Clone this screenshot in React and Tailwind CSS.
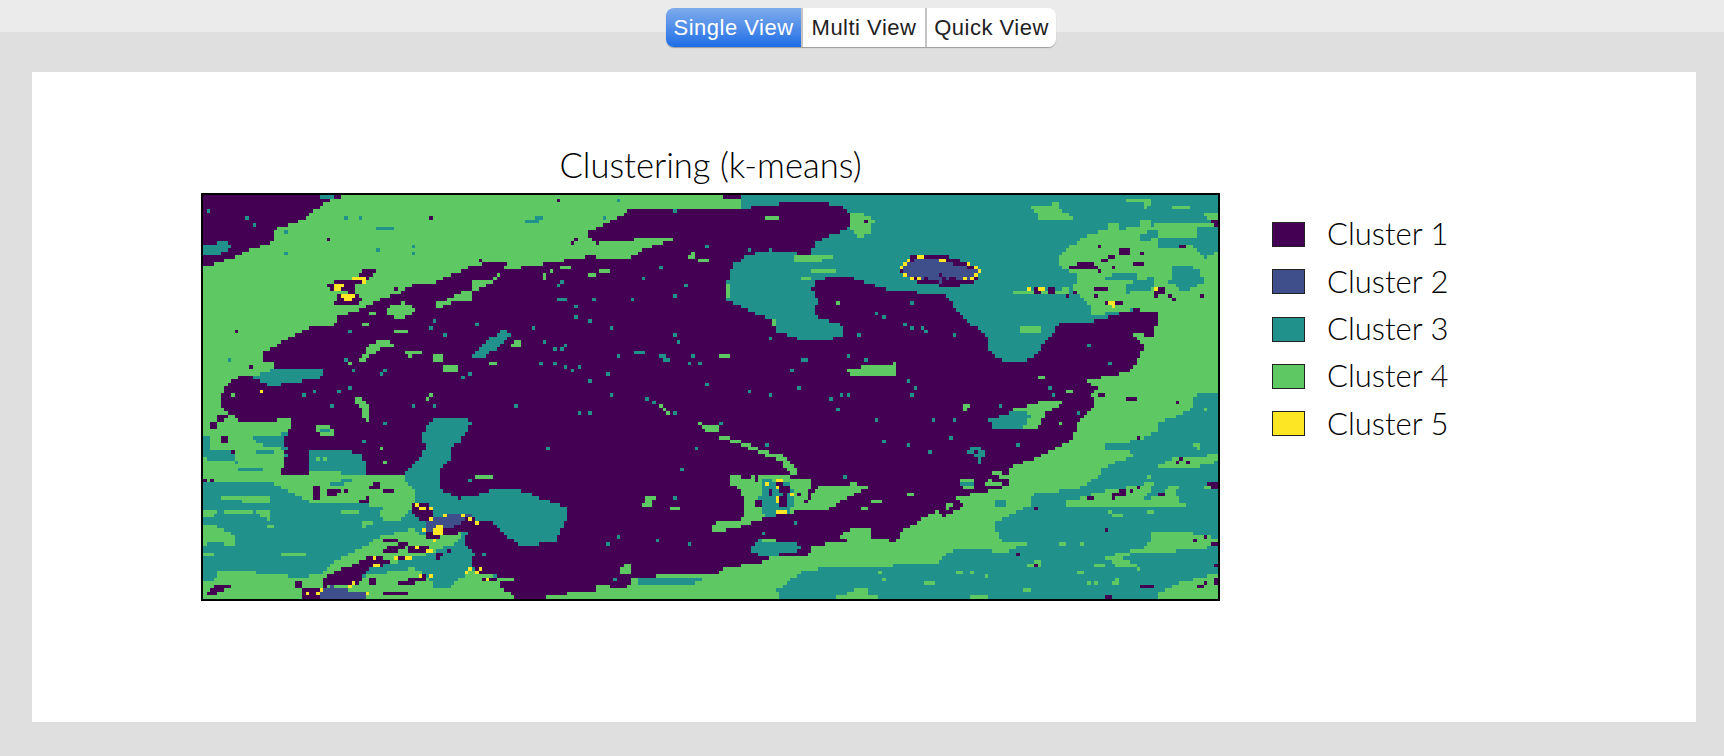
import React from 'react';

const PURPLE = '#440154';
const BLUE = '#3f4f8c';
const TEAL = '#21918c';
const GREEN = '#5ec962';
const YELLOW = '#fde725';

const PLOT_W = 1015;
const PLOT_H = 404;
const COLS = 287;
const ROWS = 114;

// crops of the picture the outlines were read from
const ORIGINS = { a: [190, 140], b: [720, 140], c: [190, 370], d: [720, 370] };
const ZOOM = 2.958;

const toCell = (quad, x, y) => {
  const [ox, oy] = ORIGINS[quad];
  return [((ox + x / ZOOM - 203) / PLOT_W) * COLS, ((oy + y / ZOOM - 195) / PLOT_H) * ROWS];
};

const shapes = [
  // band across the top left
  [GREEN, 'a', [37, 375, 130, 350, 180, 325, 250, 300, 245, 265, 330, 240, 390, 190, 450, 165, 1580, 165, 1580, 205, 1300, 205, 1260, 235, 1170, 275, 1200, 305, 1300, 295, 1450, 285, 1340, 325, 1300, 350, 1170, 345, 1000, 375, 930, 385, 895, 410, 830, 420, 835, 440, 800, 450, 770, 470, 710, 490, 740, 495, 780, 480, 845, 470, 830, 450, 880, 430, 920, 395, 940, 362, 900, 358, 830, 375, 770, 400, 730, 420, 660, 430, 640, 445, 540, 480, 490, 510, 440, 520, 430, 545, 360, 550, 310, 575, 270, 600, 220, 630, 215, 655, 250, 660, 240, 700, 37, 700]],
  [PURPLE, 'a', [405, 430, 450, 410, 490, 410, 520, 380, 555, 385, 525, 415, 490, 425, 490, 450, 510, 475, 490, 490, 420, 490, 440, 460, 470, 450, 420, 445]],
  [YELLOW, 'a', [475, 408, 515, 408, 515, 420, 475, 418]],
  [YELLOW, 'a', [425, 425, 460, 420, 460, 432, 440, 447, 425, 447]],
  [YELLOW, 'a', [450, 458, 490, 455, 470, 475, 452, 470]],
  [TEAL, 'a', [40, 310, 110, 300, 125, 320, 75, 340, 40, 345]],
  [TEAL, 'a', [385, 165, 430, 165, 430, 175, 390, 175]],
  [TEAL, 'a', [545, 265, 575, 255, 615, 265, 615, 270, 545, 270]],
  [TEAL, 'a', [990, 238, 1040, 225, 1050, 240, 990, 245]],
  [GREEN, 'a', [575, 500, 630, 480, 670, 505, 620, 530, 590, 520]],
  [GREEN, 'a', [535, 600, 580, 592, 615, 605, 560, 620, 510, 655, 450, 665, 500, 650]],
  [GREEN, 'a', [600, 558, 640, 565, 640, 575, 605, 575]],
  [GREEN, 'a', [638, 628, 685, 628, 685, 634, 645, 642]],
  [GREEN, 'a', [715, 635, 745, 635, 745, 652, 715, 652]],
  [GREEN, 'a', [885, 655, 908, 655, 895, 670]],
  [GREEN, 'a', [745, 670, 790, 670, 790, 690, 755, 690]],
  [GREEN, 'a', [945, 600, 985, 592, 985, 610, 950, 615]],
  [GREEN, 'a', [1060, 385, 1140, 367, 1140, 375, 1060, 390]],
  [GREEN, 'a', [1040, 395, 1055, 400, 1050, 410, 1040, 408]],
  [GREEN, 'a', [1175, 393, 1200, 393, 1200, 400, 1175, 400]],
  [GREEN, 'a', [1210, 385, 1240, 378, 1240, 390, 1210, 392]],
  [GREEN, 'a', [1475, 340, 1492, 332, 1492, 348, 1470, 348]],
  [GREEN, 'a', [1505, 350, 1530, 350, 1530, 358, 1505, 358]],
  [GREEN, 'a', [505, 545, 530, 535, 530, 548, 505, 548]],
  [GREEN, 'a', [535, 505, 550, 505, 545, 522, 535, 522]],
  [TEAL, 'a', [838, 640, 880, 590, 930, 560, 950, 575, 920, 610, 870, 640]],
  [GREEN, 'a', [945, 600, 985, 592, 985, 610, 950, 615]],
  [TEAL, 'a', [1085, 465, 1115, 465, 1115, 480, 1085, 478]],
  [TEAL, 'a', [1300, 620, 1345, 625, 1345, 635, 1310, 628]],
  [TEAL, 'a', [1385, 638, 1415, 640, 1415, 652, 1395, 650]],

  // top right water
  [GREEN, 'b', [-10, 170, 50, 170, 120, 185, 60, 205, -10, 205]],
  [TEAL, 'b', [60, 165, 1478, 165, 1478, 520, 1230, 500, 1090, 540, 1010, 540, 960, 600, 930, 640, 890, 660, 840, 655, 790, 620, 800, 590, 780, 570, 720, 530, 690, 490, 660, 455, 560, 450, 490, 440, 380, 405, 290, 410, 270, 440, 290, 470, 280, 520, 365, 550, 365, 575, 330, 590, 240, 590, 170, 570, 150, 530, 70, 500, 20, 470, 20, 420, 40, 370, 70, 345, 140, 325, 270, 340, 280, 300, 385, 260, 385, 215, 350, 190, 210, 185, 120, 195, 60, 205]],
  [GREEN, 'b', [385, 215, 420, 210, 455, 240, 440, 280, 410, 287, 385, 265]],
  [GREEN, 'b', [220, 342, 330, 342, 330, 350, 270, 365, 220, 360]],
  [GREEN, 'b', [270, 385, 340, 385, 340, 392, 270, 395]],
  [GREEN, 'b', [240, 400, 370, 400, 300, 408, 240, 410]],
  [GREEN, 'b', [920, 200, 1000, 185, 1010, 210, 1050, 232, 945, 235]],
  [GREEN, 'b', [1000, 350, 1040, 310, 1100, 275, 1220, 260, 1300, 250, 1450, 215, 1478, 215, 1478, 700, 1225, 700, 1240, 640, 1260, 610, 1210, 570, 1280, 580, 1280, 560, 1300, 545, 1300, 515, 1230, 500, 1100, 520, 1100, 490, 1030, 440, 870, 445, 870, 455, 1030, 460, 1060, 400, 1000, 370]],
  [TEAL, 'b', [1340, 370, 1420, 380, 1430, 420, 1370, 450, 1330, 420]],
  [TEAL, 'b', [1140, 400, 1230, 392, 1230, 410, 1140, 416]],
  [TEAL, 'b', [1200, 425, 1280, 405, 1280, 440, 1200, 452]],
  [TEAL, 'b', [1240, 275, 1300, 270, 1300, 290, 1240, 300]],
  [TEAL, 'b', [1300, 290, 1400, 290, 1400, 310, 1300, 320]],
  [TEAL, 'b', [1410, 260, 1478, 255, 1478, 330, 1430, 350, 1400, 320]],
  [TEAL, 'b', [1270, 215, 1478, 205, 1478, 240, 1290, 250]],
  [GREEN, 'b', [1070, 170, 1140, 170, 1140, 178, 1070, 178]],
  [GREEN, 'b', [1200, 170, 1280, 170, 1260, 205, 1250, 185, 1200, 185]],
  [GREEN, 'b', [1340, 190, 1390, 190, 1390, 205, 1340, 205]],
  [GREEN, 'b', [1145, 250, 1180, 250, 1175, 265, 1150, 265]],
  [GREEN, 'b', [1240, 240, 1280, 235, 1270, 262, 1240, 265]],
  [GREEN, 'b', [1435, 215, 1478, 210, 1478, 240, 1440, 238]],
  [PURPLE, 'b', [1015, 385, 1060, 365, 1110, 365, 1135, 390, 1080, 385]],
  [PURPLE, 'b', [1130, 350, 1170, 340, 1170, 348, 1130, 362]],
  [PURPLE, 'b', [1180, 323, 1215, 323, 1215, 340, 1180, 340]],
  [PURPLE, 'b', [1222, 360, 1265, 360, 1250, 375, 1230, 375]],
  [PURPLE, 'b', [1350, 305, 1385, 315, 1385, 322, 1360, 320]],
  [PURPLE, 'b', [1455, 238, 1478, 238, 1478, 258, 1465, 258]],
  [PURPLE, 'b', [1110, 436, 1145, 436, 1145, 445, 1110, 445]],
  [PURPLE, 'b', [1135, 480, 1190, 480, 1170, 495, 1150, 492]],
  [PURPLE, 'b', [1150, 505, 1185, 505, 1185, 513, 1150, 513]],
  [PURPLE, 'b', [1285, 430, 1315, 436, 1310, 460, 1285, 462]],
  [PURPLE, 'b', [970, 437, 1000, 437, 985, 455, 972, 455]],
  [PURPLE, 'b', [930, 438, 945, 438, 945, 452, 930, 452]],
  [YELLOW, 'b', [940, 437, 962, 437, 950, 447]],
  [YELLOW, 'b', [1152, 478, 1170, 478, 1170, 498, 1160, 498]],
  // blue patch in the water
  [PURPLE, 'b', [525, 380, 560, 345, 600, 340, 670, 345, 710, 358, 775, 385, 750, 425, 690, 432, 605, 428, 590, 420, 550, 405]],
  [BLUE, 'b', [540, 382, 570, 355, 620, 348, 695, 368, 760, 385, 740, 415, 650, 420, 590, 410, 550, 397]],
  [YELLOW, 'b', [580, 340, 602, 340, 602, 348, 580, 348]],
  [YELLOW, 'b', [648, 347, 665, 347, 665, 357, 648, 357]],
  [YELLOW, 'b', [655, 420, 692, 420, 692, 428, 655, 428]],
  [YELLOW, 'b', [752, 390, 768, 385, 768, 398, 750, 405]],
  [GREEN, 'b', [130, 230, 175, 230, 175, 236, 130, 236]],
  [GREEN, 'b', [20, 420, 32, 420, 32, 470, 20, 470]],
  [GREEN, 'b', [150, 530, 162, 530, 162, 555, 150, 555]],
  [GREEN, 'b', [340, 480, 355, 480, 355, 488, 340, 488]],
  [GREEN, 'b', [890, 555, 945, 548, 945, 568, 890, 575]],
  [GREEN, 'b', [0, 636, 28, 636, 28, 644, 0, 644]],
  [GREEN, 'b', [380, 695, 420, 665, 525, 660, 525, 695]],
  [TEAL, 'b', [228, 645, 268, 645, 250, 655]],
  [GREEN, 'b', [885, 672, 930, 672, 930, 680, 885, 680]],

  // lower left land
  [TEAL, 'c', [37, 0, 200, 0, 130, 30, 100, 60, 85, 100, 110, 125, 155, 155, 300, 145, 300, 170, 280, 200, 285, 260, 270, 270, 270, 315, 350, 315, 350, 240, 430, 232, 510, 250, 525, 310, 630, 315, 700, 232, 688, 205, 695, 170, 720, 145, 820, 138, 832, 160, 800, 210, 770, 235, 770, 260, 735, 300, 740, 350, 790, 380, 850, 370, 900, 352, 970, 355, 1110, 405, 1120, 425, 1080, 510, 980, 520, 920, 480, 895, 450, 850, 445, 820, 480, 810, 510, 840, 545, 830, 580, 860, 600, 910, 610, 920, 640, 965, 680, 965, 700, 37, 700]],
  [GREEN, 'c', [37, 0, 200, 0, 130, 30, 100, 60, 85, 100, 110, 125, 155, 155, 300, 145, 300, 170, 270, 190, 280, 260, 270, 315, 350, 315, 360, 300, 520, 310, 630, 315, 660, 350, 670, 400, 620, 450, 560, 440, 570, 410, 500, 390, 380, 400, 230, 330, 37, 330]],
  [TEAL, 'c', [37, 195, 60, 195, 60, 240, 130, 240, 140, 275, 60, 265, 37, 262]],
  [TEAL, 'c', [185, 200, 280, 190, 285, 235, 210, 220]],
  [TEAL, 'c', [200, 240, 250, 240, 250, 250, 200, 250]],
  [TEAL, 'c', [140, 285, 220, 290, 220, 300, 140, 300]],
  [TEAL, 'c', [355, 240, 430, 232, 510, 250, 525, 305, 440, 300, 360, 285]],
  [TEAL, 'c', [420, 330, 480, 320, 480, 335, 420, 340]],
  [TEAL, 'c', [185, 20, 240, 0, 400, 0, 380, 25, 315, 35, 235, 50]],
  [GREEN, 'c', [90, 370, 230, 370, 240, 400, 90, 380]],
  [GREEN, 'c', [37, 415, 80, 420, 70, 435, 37, 435]],
  [GREEN, 'c', [100, 420, 180, 420, 180, 430, 100, 430]],
  [GREEN, 'c', [200, 420, 235, 415, 235, 445, 200, 430]],
  [GREEN, 'c', [450, 415, 500, 412, 500, 430, 450, 430]],
  [GREEN, 'c', [505, 450, 560, 445, 510, 465]],
  [GREEN, 'c', [360, 475, 388, 475, 388, 483, 360, 483]],
  [GREEN, 'c', [225, 457, 245, 457, 245, 465, 225, 465]],
  [GREEN, 'c', [37, 458, 70, 458, 130, 490, 140, 522, 70, 510, 37, 520]],
  [GREEN, 'c', [270, 540, 300, 535, 345, 545, 345, 552, 270, 552]],
  [GREEN, 'c', [37, 545, 70, 545, 70, 555, 37, 555]],
  [GREEN, 'c', [80, 595, 230, 600, 320, 615, 395, 600, 420, 570, 500, 530, 570, 490, 660, 470, 690, 490, 810, 470, 790, 510, 720, 540, 640, 560, 520, 590, 510, 610, 640, 590, 690, 570, 720, 640, 760, 650, 830, 590, 850, 605, 910, 610, 920, 640, 965, 680, 965, 700, 37, 700, 37, 630, 80, 615]],
  [TEAL, 'c', [640, 570, 830, 545, 830, 580, 780, 630, 750, 650, 700, 610]],
  [GREEN, 'c', [915, 612, 960, 612, 960, 620, 915, 620]],
  [GREEN, 'c', [840, 312, 870, 312, 910, 318, 910, 325, 845, 325]],
  // purple pockets, lower left
  [PURPLE, 'c', [395, 612, 470, 580, 540, 545, 600, 570, 520, 590, 510, 612, 500, 632, 395, 642]],
  [PURPLE, 'c', [37, 672, 70, 640, 122, 640, 100, 655, 60, 672]],
  [PURPLE, 'c', [335, 642, 385, 642, 395, 688, 335, 672]],
  [PURPLE, 'c', [725, 675, 800, 675, 800, 690, 720, 690]],
  [PURPLE, 'c', [310, 630, 328, 630, 325, 648, 315, 648]],
  [PURPLE, 'c', [360, 345, 385, 345, 385, 385, 362, 385]],
  [PURPLE, 'c', [398, 352, 450, 352, 435, 370, 405, 378]],
  [PURPLE, 'c', [525, 345, 565, 325, 560, 348, 525, 360]],
  [PURPLE, 'c', [575, 355, 605, 352, 590, 368, 575, 368]],
  [PURPLE, 'c', [500, 385, 530, 378, 530, 392, 500, 392]],
  [PURPLE, 'c', [60, 150, 80, 150, 75, 170, 60, 170]],
  [PURPLE, 'c', [95, 198, 115, 195, 115, 215, 95, 215]],
  [PURPLE, 'c', [80, 130, 125, 130, 100, 150, 80, 150]],
  [PURPLE, 'c', [115, 170, 130, 170, 130, 178, 115, 178]],
  [PURPLE, 'c', [120, 232, 135, 245, 125, 248]],
  [PURPLE, 'c', [660, 395, 710, 395, 720, 445, 680, 450, 660, 420]],
  [PURPLE, 'c', [690, 430, 845, 435, 840, 470, 770, 490, 700, 500]],
  [BLUE, 'c', [700, 445, 750, 430, 830, 430, 800, 455, 760, 470, 700, 480]],
  [YELLOW, 'c', [715, 465, 750, 455, 755, 490, 725, 490]],
  [PURPLE, 'c', [728, 475, 752, 475, 752, 482, 728, 482]],
  [YELLOW, 'c', [680, 405, 698, 405, 698, 418, 680, 418]],
  [PURPLE, 'c', [570, 500, 630, 500, 600, 512, 570, 510]],
  [PURPLE, 'c', [585, 525, 640, 505, 650, 520, 600, 545, 570, 545]],
  [PURPLE, 'c', [640, 520, 700, 520, 720, 540, 640, 540]],
  [YELLOW, 'c', [648, 515, 660, 515, 660, 525, 648, 525]],
  [YELLOW, 'c', [697, 535, 715, 532, 715, 543, 697, 545]],
  [YELLOW, 'c', [715, 500, 730, 500, 730, 510, 715, 510]],
  [PURPLE, 'c', [605, 550, 660, 550, 650, 562, 605, 562]],
  [YELLOW, 'c', [636, 550, 652, 550, 652, 560, 636, 560]],
  [YELLOW, 'c', [542, 568, 566, 568, 566, 588, 542, 588]],
  [PURPLE, 'c', [610, 630, 690, 605, 700, 620, 630, 640]],
  [PURPLE, 'c', [565, 660, 640, 655, 650, 668, 575, 668]],
  [PURPLE, 'c', [525, 620, 555, 612, 555, 630, 525, 635]],
  [PURPLE, 'c', [720, 550, 770, 530, 770, 535, 730, 560]],
  [BLUE, 'c', [380, 652, 420, 640, 460, 650, 525, 660, 510, 688, 380, 688]],
  [YELLOW, 'c', [455, 665, 508, 665, 508, 672, 455, 672]],
  [PURPLE, 'c', [870, 615, 905, 615, 905, 630, 870, 630]],
  [YELLOW, 'c', [902, 610, 910, 610, 910, 630, 902, 630]],
  [GREEN, 'c', [480, 80, 495, 75, 525, 100, 525, 150, 515, 145, 505, 115]],
  [GREEN, 'c', [700, 80, 720, 68, 705, 90]],
  [GREEN, 'c', [370, 165, 415, 165, 430, 195, 385, 195, 370, 180]],
  [TEAL, 'c', [385, 170, 410, 170, 415, 185, 390, 188]],
  [GREEN, 'c', [1350, 375, 1385, 370, 1355, 410, 1340, 400]],
  [GREEN, 'c', [1418, 404, 1452, 404, 1452, 412, 1418, 412]],
  [GREEN, 'c', [1305, 422, 1322, 422, 1322, 430, 1305, 430]],
  [GREEN, 'c', [1262, 580, 1310, 575, 1305, 600, 1280, 605]],
  [GREEN, 'c', [1200, 640, 1235, 630, 1240, 648, 1200, 648]],
  [GREEN, 'c', [1490, 145, 1520, 160, 1568, 170, 1568, 188, 1520, 180]],
  [GREEN, 'c', [1385, 100, 1415, 118, 1415, 128, 1385, 112]],
  [GREEN, 'c', [1535, 465, 1568, 455, 1568, 480, 1545, 478]],
  [GREEN, 'c', [965, 685, 1160, 655, 1300, 640, 1300, 612, 1580, 602, 1580, 700, 965, 700]],
  [TEAL, 'c', [1330, 610, 1510, 612, 1510, 630, 1330, 632]],

  // lower right band
  [GREEN, 'd', [0, 590, 100, 570, 140, 565, 145, 550, 215, 555, 265, 545, 270, 518, 380, 510, 450, 495, 525, 510, 530, 480, 600, 440, 640, 415, 660, 435, 725, 400, 690, 380, 730, 370, 850, 345, 860, 285, 930, 265, 1000, 230, 1040, 210, 1060, 150, 1105, 110, 1100, 70, 1120, 60, 1100, 30, 1205, 5, 1220, -10, 1478, -10, 1478, 700, 0, 700]],
  [TEAL, 'd', [1478, 70, 1410, 70, 1390, 120, 1300, 155, 1300, 180, 1230, 210, 1140, 215, 1230, 250, 1130, 290, 1130, 310, 1060, 350, 920, 370, 915, 400, 820, 450, 810, 470, 840, 510, 920, 510, 840, 540, 700, 525, 640, 570, 480, 580, 250, 590, 170, 650, 190, 700, 1478, 700]],
  [GREEN, 'd', [1290, 290, 1340, 260, 1478, 250, 1478, 270, 1400, 290]],
  [GREEN, 'd', [1020, 390, 1130, 360, 1290, 330, 1250, 385, 1300, 370, 1340, 340, 1360, 390, 1400, 410, 1270, 400, 1100, 400, 1020, 402]],
  [GREEN, 'd', [1280, 480, 1380, 480, 1478, 500, 1440, 530, 1280, 540, 1180, 550, 1250, 590, 1170, 580, 1140, 555, 1260, 525]],
  [GREEN, 'd', [1300, 660, 1360, 630, 1478, 600, 1478, 700, 1280, 700]],
  [GREEN, 'd', [310, 688, 400, 650, 470, 670, 470, 700, 310, 700]],
  [GREEN, 'd', [1420, 340, 1478, 335, 1478, 355, 1440, 355]],
  [GREEN, 'd', [1255, 412, 1290, 412, 1275, 430]],
  [GREEN, 'd', [1160, 430, 1190, 430, 1190, 438, 1160, 438]],
  [GREEN, 'd', [1400, 220, 1430, 215, 1410, 240]],
  [GREEN, 'd', [770, 490, 800, 490, 800, 496, 770, 496]],
  [GREEN, 'd', [1000, 510, 1025, 510, 1025, 516, 1000, 516]],
  [GREEN, 'd', [1110, 570, 1135, 570, 1135, 578, 1110, 578]],
  [GREEN, 'd', [910, 575, 950, 560, 950, 582, 920, 585]],
  [GREEN, 'd', [700, 595, 725, 595, 725, 602, 700, 602]],
  [GREEN, 'd', [1050, 590, 1085, 600, 1055, 600]],
  [GREEN, 'd', [1160, 630, 1180, 615, 1170, 648]],
  [GREEN, 'd', [610, 630, 640, 630, 640, 638, 610, 638]],
  [GREEN, 'd', [895, 645, 915, 645, 915, 655, 895, 655]],
  [GREEN, 'd', [745, 672, 795, 672, 795, 682, 745, 682]],
  [GREEN, 'd', [400, 645, 440, 645, 440, 655, 400, 655]],
  [TEAL, 'd', [1135, 215, 1225, 235, 1140, 232]],
  [TEAL, 'd', [812, 388, 845, 388, 845, 404, 812, 404]],
  [PURPLE, 'd', [1135, 375, 1200, 352, 1205, 368, 1170, 380]],
  [PURPLE, 'd', [1095, 688, 1140, 670, 1170, 663, 1140, 690]],
  [PURPLE, 'd', [1445, 520, 1478, 500, 1478, 525, 1450, 525]],
  [PURPLE, 'd', [1298, 360, 1316, 360, 1310, 378, 1300, 378]],
  [PURPLE, 'd', [1205, 84, 1230, 84, 1230, 92, 1205, 92]],
  [PURPLE, 'd', [1120, 68, 1135, 68, 1135, 75, 1120, 75]],
  [PURPLE, 'd', [1248, 638, 1282, 638, 1282, 646, 1248, 646]],
  [PURPLE, 'd', [1410, 640, 1428, 632, 1428, 646, 1410, 648]],
  [PURPLE, 'd', [1445, 335, 1478, 335, 1478, 350, 1455, 350]],
  [PURPLE, 'd', [920, 580, 940, 570, 935, 585]],
  // islands in the purple
  [GREEN, 'd', [860, 120, 960, 90, 1015, 95, 960, 130, 935, 178, 895, 172]],
  [TEAL, 'd', [798, 145, 860, 125, 925, 128, 890, 178, 800, 178]],
  [TEAL, 'd', [88, 535, 100, 510, 125, 500, 165, 505, 230, 510, 242, 530, 220, 545, 120, 548]],
  [GREEN, 'd', [125, 498, 165, 498, 165, 508, 125, 508]],
  [GREEN, 'd', [350, 492, 400, 465, 450, 465, 450, 500, 380, 510]],
  [TEAL, 'd', [725, 235, 760, 225, 790, 250, 765, 265, 745, 250]],
  [GREEN, 'd', [710, 325, 755, 325, 750, 350, 720, 350]],
  [TEAL, 'd', [712, 328, 755, 328, 755, 340, 715, 340]],
  [GREEN, 'd', [775, 330, 805, 325, 850, 345, 790, 345]],
  [GREEN, 'd', [800, 300, 835, 305, 860, 310, 860, 325, 830, 320]],
  [GREEN, 'd', [665, 400, 690, 395, 680, 412, 665, 412]],
  [GREEN, 'd', [725, 100, 742, 100, 735, 118, 725, 118]],
  [GREEN, 'd', [938, 14, 958, 14, 958, 32, 938, 32]],
  [GREEN, 'd', [375, -5, 500, -5, 490, 12, 385, 12]],
  [GREEN, 'd', [1075, 25, 1130, 40, 1100, 45]],
  [GREEN, 'd', [1020, 65, 1050, 58, 1030, 75]],
  [GREEN, 'd', [1000, 150, 1020, 158, 1005, 160]],
  [GREEN, 'd', [1018, 170, 1040, 170, 1040, 178, 1018, 178]],
  [GREEN, 'd', [0, 190, 60, 210, 130, 238, 190, 255, 232, 305, 215, 312, 175, 265, 120, 247, 50, 217, 0, 200]],
  [GREEN, 'd', [30, 315, 60, 305, 270, 320, 270, 340, 245, 402, 295, 345, 405, 335, 440, 347, 385, 375, 300, 420, 220, 420, 130, 440, 0, 480, -10, 450, 70, 440, 75, 400, 60, 350, 30, 340]],
  [TEAL, 'd', [120, 320, 210, 335, 218, 400, 200, 430, 130, 432, 120, 390, 105, 400, 125, 360]],
  [PURPLE, 'd', [155, 330, 205, 340, 215, 365, 190, 370]],
  [PURPLE, 'd', [145, 350, 160, 350, 160, 375, 145, 375]],
  [PURPLE, 'd', [178, 375, 195, 375, 195, 408, 178, 408]],
  [PURPLE, 'd', [100, 388, 125, 388, 120, 402, 100, 402]],
  [PURPLE, 'd', [62, 310, 92, 310, 92, 316, 62, 316]],
  [PURPLE, 'd', [100, 312, 120, 320, 105, 328]],
  [PURPLE, 'd', [225, 362, 238, 362, 238, 372, 225, 372]],
  [YELLOW, 'd', [168, 318, 190, 316, 190, 327, 168, 327]],
  [YELLOW, 'd', [130, 335, 140, 335, 140, 346, 130, 346]],
  [YELLOW, 'd', [165, 345, 176, 345, 170, 354]],
  [YELLOW, 'd', [208, 362, 220, 362, 214, 372]],
  [YELLOW, 'd', [198, 380, 211, 380, 205, 390]],
  [YELLOW, 'd', [165, 413, 195, 413, 195, 422, 165, 422]],
  [YELLOW, 'd', [167, 376, 173, 376, 173, 390, 167, 390]],
  [GREEN, 'd', [418, 408, 440, 395, 435, 410, 422, 412]],
  [GREEN, 'd', [450, 388, 476, 388, 476, 394, 450, 394]],
  [GREEN, 'd', [475, 379, 510, 379, 510, 385, 475, 385]],
  [GREEN, 'd', [520, 371, 545, 371, 545, 378, 520, 378]],
  [GREEN, 'd', [550, 362, 570, 362, 570, 370, 550, 370]],
];

// single cells
const specks = [
  [TEAL, 'a', [[55, 215], [168, 232], [193, 257], [288, 275], [460, 232], [502, 232], [660, 310], [665, 335], [555, 328], [280, 335], [118, 648], [1085, 432], [1103, 422], [1138, 490], [1138, 525], [1188, 535], [1248, 552], [1018, 552], [1197, 474], [1310, 474], [1470, 432], [1438, 458], [1393, 378], [1343, 413], [845, 544], [750, 578], [475, 570], [716, 552], [726, 535], [1438, 578], [1448, 595], [1110, 604], [1050, 595], [1076, 622], [1103, 622], [1265, 638], [1488, 638], [1505, 656], [1480, 665], [1042, 656], [1078, 656], [1110, 675], [1128, 682], [1155, 675], [485, 682], [572, 682], [458, 648], [1225, 232], [1265, 180], [1430, 214], [1530, 310]]],
  [PURPLE, 'a', [[143, 570], [408, 293], [855, 354], [1095, 180], [1130, 302], [1147, 293], [613, 440], [640, 438], [180, 675], [715, 230]]],
  [TEAL, 'b', [[565, 483], [462, 518], [488, 527], [547, 544], [565, 552], [598, 552], [607, 562], [693, 578], [410, 578], [153, 587], [1095, 605], [1157, 665], [378, 640], [428, 648], [92, 320], [150, 327], [248, 648]]],
  [PURPLE, 'b', [[437, 240], [1122, 318], [1243, 336], [1160, 380], [1423, 465], [1028, 465], [1045, 448], [1113, 465], [1330, 465], [1345, 472]]],
  [YELLOW, 'b', [[540, 380], [547, 370], [556, 360], [550, 397], [565, 405], [590, 413], [612, 405], [720, 405], [745, 412], [738, 372], [752, 380], [915, 440], [1293, 440]]],
  [PURPLE, 'b', [[615, 405], [658, 405], [680, 405], [695, 405], [708, 363], [650, 395]]],
  [TEAL, 'c', [[563, 10], [803, 18], [830, 10], [1232, 10], [1188, 36], [1533, 45], [340, 78], [365, 62], [443, 62], [468, 53], [425, 105], [658, 105], [726, 105], [966, 105], [1250, 78], [1155, 131], [1180, 131], [1352, 88], [1370, 96], [1430, 122], [580, 157], [1498, 227], [1060, 235], [1455, 296], [828, 330], [1430, 382], [1265, 495], [1240, 512], [1378, 504], [1480, 512], [515, 210], [1257, 622], [868, 547]]],
  [GREEN, 'c', [[570, 227], [575, 270], [125, 70], [400, 268], [380, 260]]],
  [PURPLE, 'c', [[460, 356], [530, 382], [45, 322], [65, 322]]],
  [YELLOW, 'c', [[210, 62], [672, 398], [710, 408], [718, 440], [760, 434], [803, 434], [828, 442], [845, 450], [690, 468], [672, 530], [348, 658], [375, 658], [390, 652], [375, 680], [470, 640], [485, 632], [820, 600], [845, 600], [855, 590], [828, 590], [682, 605], [708, 605], [530, 658], [545, 555], [610, 555], [885, 622]]],
  [TEAL, 'd', [[85, 62], [150, 78], [230, 52], [325, 88], [350, 114], [360, 78], [378, 70], [465, 148], [633, 148], [693, 148], [480, 210], [557, 217], [616, 244], [684, 200], [883, 217], [135, 217], [772, 279], [368, 314], [557, 36], [574, 53], [565, 70], [975, 53], [985, 70], [830, 105], [1062, 122], [128, 488], [222, 452], [5, 158], [215, 2]]],
  [PURPLE, 'd', [[1355, 96], [1235, 200], [1362, 260], [1381, 270], [1355, 279], [1218, 356], [1235, 348], [1090, 382], [1106, 382], [935, 408], [1140, 468], [1405, 504], [1432, 495], [882, 547], [1466, 582], [1466, 616], [1466, 632], [755, 244], [1432, 632]]],
  [GREEN, 'd', [[960, 296], [1080, 270], [1268, 314], [1350, 348], [1150, 425], [1070, 510], [745, 598], [1090, 625], [1110, 625], [480, 615], [478, 598], [790, 607], [1148, 174], [1440, 114]]],
  [TEAL, 'd', [[1315, 630]]],
];

const inside = (poly, x, y) => {
  let hit = false;
  for (let i = 0, j = poly.length - 1; i < poly.length; j = i++) {
    const [xa, ya] = poly[i];
    const [xb, yb] = poly[j];
    if (ya > y !== yb > y && x < ((xb - xa) * (y - ya)) / (yb - ya) + xa) hit = !hit;
  }
  return hit;
};

// paint shapes in order into a grid, then merge each row into runs
const buildRuns = () => {
  const grid = Array.from({ length: ROWS }, () => Array(COLS).fill(PURPLE));
  shapes.forEach(([color, quad, flat]) => {
    const poly = [];
    for (let i = 0; i < flat.length; i += 2) poly.push(toCell(quad, flat[i], flat[i + 1]));
    for (let r = 0; r < ROWS; r++) {
      for (let c = 0; c < COLS; c++) {
        if (inside(poly, c + 0.5, r + 0.5)) grid[r][c] = color;
      }
    }
  });
  specks.forEach(([color, quad, pts]) => {
    pts.forEach(([x, y]) => {
      const [c, r] = toCell(quad, x, y);
      const row = grid[Math.floor(r)];
      if (row && Math.floor(c) < COLS && c >= 0) row[Math.floor(c)] = color;
    });
  });
  const runs = [];
  grid.forEach((row, r) => {
    let start = 0;
    for (let c = 1; c <= COLS; c++) {
      if (c === COLS || row[c] !== row[start]) {
        runs.push({ x: start, y: r, w: c - start, color: row[start] });
        start = c;
      }
    }
  });
  return runs;
};

const runs = buildRuns();

const legend = [
  { label: 'Cluster 1', color: 'bg-[#440154]' },
  { label: 'Cluster 2', color: 'bg-[#3f4f8c]' },
  { label: 'Cluster 3', color: 'bg-[#21918c]' },
  { label: 'Cluster 4', color: 'bg-[#5ec962]' },
  { label: 'Cluster 5', color: 'bg-[#fde725]' },
];

const App = () => {
  return (
    <div className="w-[1724px] h-[756px] overflow-hidden bg-[#dfdfdf] flex flex-col font-['Lato',sans-serif]">
      {/* Top bar with view switch */}
      <div className="h-8 shrink-0 bg-[#ebebeb] flex justify-center pr-[2px]">
        <div className="mt-2 h-[39px] flex rounded-lg overflow-hidden shadow-[0_1px_1px_rgba(0,0,0,0.3)] font-['Liberation_Sans',sans-serif] text-[22px] tracking-[0.5px]">
          <button className="w-[135px] bg-gradient-to-b from-[#7eabeb] to-[#1a6de6] text-white">Single View</button>
          <button className="w-[124px] bg-white text-[#222] border-l-2 border-[#c4c4c4]">Multi View</button>
          <button className="w-[131px] bg-white text-[#222] border-l-2 border-[#c4c4c4]">Quick View</button>
        </div>
      </div>

      {/* Plot panel */}
      <main className="mt-[40px] ml-8 w-[1664px] h-[650px] bg-white flex pl-[169px] pt-[71px]">
        <div className="w-[1019px] shrink-0">
          <h1 className="h-[50px] pb-[10px] flex items-end justify-center text-[34.6px] leading-none font-light text-black">
            Clustering (k-means)
          </h1>
          <div className="w-[1019px] h-[408px] border-2 border-black">
            <svg viewBox={`0 0 ${COLS} ${ROWS}`} preserveAspectRatio="none" className="w-full h-full block" shapeRendering="crispEdges">
              {runs.map((run, i) => (
                <rect key={i} x={run.x} y={run.y} width={run.w} height={1} fill={run.color} />
              ))}
            </svg>
          </div>
        </div>

        {/* Legend */}
        <ul className="ml-[52px] mt-[68px] flex flex-col">
          {legend.map((item) => (
            <li key={item.label} className="h-[47.3px] flex items-center">
              <span className={`w-[33px] h-[25px] border-[1.5px] border-[#222] ${item.color}`}></span>
              <span className="ml-[22px] -mt-[2px] text-[31px] font-light text-black">{item.label}</span>
            </li>
          ))}
        </ul>
      </main>
    </div>
  );
};

export default App;
